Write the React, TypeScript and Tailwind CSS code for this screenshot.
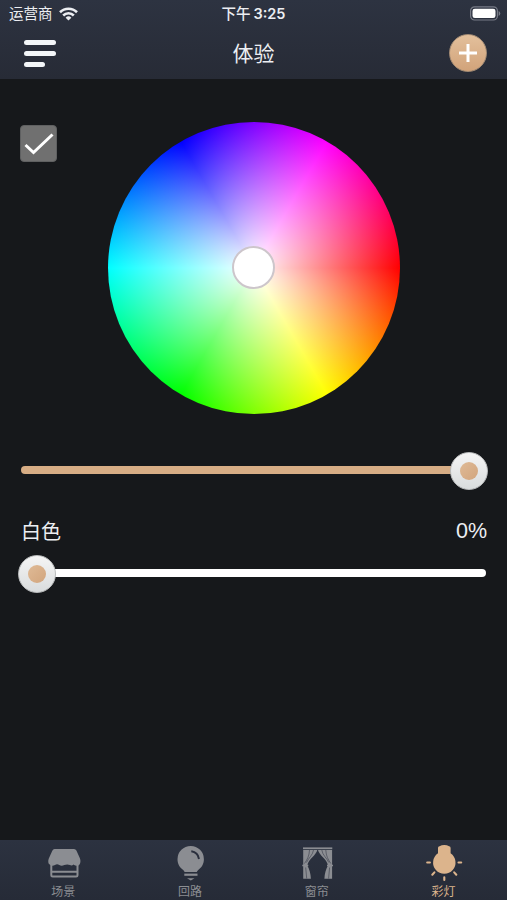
import { useState, type ReactNode } from "react";
import clsx from "clsx";

interface SliderProps {
  value: number;
  trackClass: string;
}

interface Tab {
  id: string;
  label: string;
  icon: ReactNode;
}

function SceneIcon() {
  return (
    <svg className="w-10 h-10" viewBox="0 0 40 40" fill="none">
      <path
        d="M11.500 5h19.500q1.600 0 2.400 1.500l3.600 8q.6 1.500.4 3.500-.4 3.500-3.400 3.700-2 0-3.500-1.200-1.600 1.800-3.600.6-2.600-1.200-5.600 0-3 1.300-5-.2-2.500-1.400-4.300.2-3.300 1.400-5.300-.6-1.200-.5-1.400-2.200-.2-2 .4-3.500l3.600-8Q10.100 5 11.500 5z"
        fill="currentColor"
      />
      <path d="M8.300 20v11.300q0 1.300 1.300 1.300h23.600q1.300 0 1.300-1.300V20M8.500 27.700h26" stroke="currentColor" strokeWidth="2" />
    </svg>
  );
}

function BulbIcon() {
  return (
    <svg className="w-10 h-10" viewBox="0 0 40 40" fill="none">
      <path
        d="M20.700 2A13.200 13.200 0 0 1 33.900 15.200c0 5-2.600 8.500-5.700 10.700q-1 .8-1.400 2.100H14.600q-.4-1.300-1.400-2.100C10.100 23.700 7.500 20.200 7.500 15.200A13.200 13.200 0 0 1 20.700 2z"
        fill="currentColor"
      />
      <path d="M21.300 7.300q6.700 1 7.700 7.700" stroke="#2a2f3d" strokeWidth="1.900" />
      <path d="M14.300 30.700h13.200" stroke="currentColor" strokeWidth="2.200" />
      <path d="M17 34.300h7.500l-3.700 2.200z" fill="currentColor" />
    </svg>
  );
}

function CurtainIcon() {
  return (
    <svg className="w-10 h-10" viewBox="0 0 40 40" fill="none">
      <path d="M6 4.300h29.300" stroke="currentColor" strokeWidth="1.800" />
      <path d="M6.200 6h14.100c-.8 5-9 9-10 15.500 2 3.500 3.400 8 3.600 13.200H6.200z" fill="currentColor" />
      <path d="M35.100 6H21c.8 5 9 9 10 15.500-2 3.500-3.400 8-3.600 13.200h7.700z" fill="currentColor" />
      <path d="M5.300 21.500h6M30 21.500h6" stroke="currentColor" strokeWidth="1.700" />
      <path
        d="M12.500 6c-.3 6-2 9-5 13.500M16.500 6c-.6 5-5 8-7 12.500M8.700 23.500l1 11M32.600 23.500l-1 11M28.800 6c.3 6 2 9 5 13.500M24.800 6c.6 5 5 8 7 12.500"
        stroke="#2a2f3d"
        strokeWidth="0.500"
      />
    </svg>
  );
}

function LampIcon() {
  return (
    <svg className="w-10 h-10" viewBox="0 0 40 40" fill="none">
      <path
        d="M14 4q0-1.400 1.500-1.700 2.100-1.400 4.800-1.400t4.800 1.400q1.500.3 1.500 1.700v5.300a11.200 11.200 0 1 1-12.600 0z"
        fill="currentColor"
      />
      <path
        d="M3.200 18.500h2.700M34.500 18.500h2.700M10.400 28.400l-2.100 2.300M30.200 28.400l2.100 2.300M20.300 33.200v2.700"
        stroke="currentColor"
        strokeWidth="2.100"
        strokeLinecap="round"
      />
    </svg>
  );
}

const tabs: Tab[] = [
  { id: "scene", label: "场景", icon: <SceneIcon /> },
  { id: "circuit", label: "回路", icon: <BulbIcon /> },
  { id: "curtain", label: "窗帘", icon: <CurtainIcon /> },
  { id: "light", label: "彩灯", icon: <LampIcon /> },
];

function StatusBar() {
  return (
    <div className="grid grid-cols-3 items-center h-[27px] pl-[9px] pr-[6px] text-[14.500px] leading-none">
      <div className="flex items-center gap-[6px]">
        <span className="pt-[2px]">运营商</span>
        <svg className="w-[19px] h-[14px]" viewBox="0 0 19 14" fill="none" stroke="currentColor" strokeWidth="2.600">
          <path d="M1 5.200a12.100 12.100 0 0 1 17 0" />
          <path d="M4.200 8.500a7.500 7.500 0 0 1 10.600 0" />
          <path d="M9.500 13.500 6.600 10.700a4.100 4.100 0 0 1 5.800 0z" fill="currentColor" stroke="none" />
        </svg>
      </div>
      <span className="pt-[2px] -ml-[3px] text-center font-medium whitespace-nowrap">
        下午 <span className="-ml-px font-semibold">3:25</span>
      </span>
      <svg className="justify-self-end w-[31px] h-[15px]" viewBox="0 0 31 15" fill="none">
        <rect x="0.600" y="0.800" width="26.800" height="13.200" rx="4" stroke="#777b86" strokeWidth="1.200" />
        <rect x="2.500" y="2.700" width="23" height="9.400" rx="2.300" fill="#fff" />
        <path d="M28.600 5v5q1.700-.8 1.700-2.500T28.600 5z" fill="#777b86" />
      </svg>
    </div>
  );
}

function NavBar() {
  return (
    <div className="grid grid-cols-3 items-center h-[51px] pl-6 pr-[20px]">
      <div className="flex flex-col gap-[6px] pt-[2px]">
        <span className="w-8 h-[5px] rounded-full bg-[#f3f6f8]" />
        <span className="w-8 h-[5px] rounded-full bg-[#f3f6f8]" />
        <span className="w-[21px] h-[5px] rounded-full bg-[#f3f6f8]" />
      </div>
      <h1 className="-ml-[4px] pt-px text-center text-[21px] leading-none">体验</h1>
      <button className="justify-self-end flex items-center justify-center w-[38px] h-[38px] rounded-full bg-linear-to-b from-[#e3c09c] to-[#d1a37a] border border-[#a38b74]">
        <svg className="w-[18px] h-[18px]" viewBox="0 0 18 18" stroke="#fff" strokeWidth="3">
          <path d="M0 9h18M9 0v18" />
        </svg>
      </button>
    </div>
  );
}

function ColorWheel() {
  return (
    <div className="flex items-center justify-center w-[292px] h-[292px] rounded-full bg-[radial-gradient(closest-side,#fff,rgba(255,255,255,0)),conic-gradient(from_90deg,#f00,#ff0,#0f0,#0ff,#00f,#f0f,#f00)]">
      <div className="w-[43px] h-[43px] -mt-px -ml-px rounded-full bg-white border-2 border-[#cdc6cb]" />
    </div>
  );
}

function Slider({ value, trackClass }: SliderProps) {
  return (
    <div className="relative flex items-center h-[38px] ml-[18px] mr-[19px]">
      <div className={clsx("flex-1 h-2 ml-[3px] mr-[2px] mb-[3px] rounded-full", trackClass)} />
      <div className="absolute inset-y-0 left-0 right-[38px]">
        <div
          className="absolute top-0 flex items-center justify-center w-[38px] h-[38px] rounded-full bg-linear-to-b from-[#f5f5f5] to-[#d9dcdd] border border-[#b9bbbc]"
          style={{ left: `${value}%` }}
        >
          <div className="w-[18px] h-[18px] rounded-full bg-linear-to-br from-[#dfba96] to-[#d2a57d]" />
        </div>
      </div>
    </div>
  );
}

export default function App() {
  const [activeTab, setActiveTab] = useState("light");

  return (
    <div className="flex flex-col w-full h-screen overflow-hidden bg-[#16181b] text-[#eceef2] font-['Inter','Noto_Sans_CJK_SC',sans-serif]">
      <header className="h-[79px] shrink-0 bg-linear-to-b from-[#2d3341] to-[#272b36]">
        <StatusBar />
        <NavBar />
      </header>

      <main className="flex-1 flex flex-col">
        {/* Switch + wheel */}
        <div className="flex items-start pl-5 pt-[43px]">
          <button className="flex items-center justify-center w-[37px] h-[37px] mt-[3px] rounded-[4px] bg-[#707070] border border-[#5f6061]">
            <svg className="w-[30px] h-[24px] shrink-0" viewBox="0 0 30 24" fill="none" stroke="#fff" strokeWidth="3">
              <path d="M1.500 13l8 7.500L28.500 2.500" />
            </svg>
          </button>
          <div className="ml-[51.400px]">
            <ColorWheel />
          </div>
        </div>

        {/* Brightness */}
        <div className="mt-[38px]">
          <Slider value={100} trackClass="bg-[#d7ad85]" />
        </div>

        {/* White level */}
        <div className="flex items-center justify-between h-[26px] mt-[29px] pl-[21px] pr-[20px] text-[20px] leading-none">
          <span>白色</span>
          <span className="font-['Liberation_Sans',sans-serif] text-[21.500px]">0%</span>
        </div>
        <div className="mt-[10px]">
          <Slider value={0} trackClass="bg-white" />
        </div>
      </main>

      <nav className="grid grid-cols-4 h-[60px] shrink-0 bg-linear-to-b from-[#2c3240] to-[#262b37]">
        {tabs.map((tab) => (
          <button
            key={tab.id}
            onClick={() => setActiveTab(tab.id)}
            className={clsx(
              "flex flex-col items-center pt-1",
              activeTab === tab.id ? "text-[#dcb48c]" : "text-[#8b8d92]"
            )}
          >
            {tab.icon}
            <span className="mt-[2px] text-[12px] leading-[12px]">{tab.label}</span>
          </button>
        ))}
      </nav>
    </div>
  );
}
